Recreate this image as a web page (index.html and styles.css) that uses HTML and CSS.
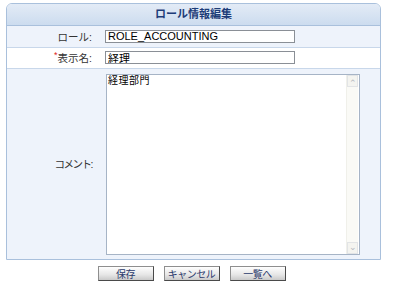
FILE: index.html
```html
<!DOCTYPE html>
<html lang="ja">
<head>
    <meta charset="UTF-8">
    <meta name="viewport" content="width=device-width, initial-scale=1.0">
    <title>ロール情報編集</title>
    <link rel="stylesheet" href="styles.css">
</head>
<body>
    <div class="panel">
        <div class="panel-title">ロール情報編集</div>
        <table class="form">
            <tr class="row odd">
                <th class="label">ロール:</th>
                <td class="value"><input type="text" class="field" value="ROLE_ACCOUNTING"></td>
            </tr>
            <tr class="row even">
                <th class="label"><span class="req">*</span>表示名:</th>
                <td class="value"><input type="text" class="field" value="経理"></td>
            </tr>
            <tr class="row odd comment-row">
                <th class="label narrow">コメント:</th>
                <td class="value">
                    <div class="memo">
                        <textarea class="memo-text">経理部門</textarea>
                        <!-- old style scrollbar -->
                        <div class="memo-bar">
                            <span class="bar-btn">&#8963;</span>
                            <span class="bar-btn down">&#8964;</span>
                        </div>
                    </div>
                </td>
            </tr>
        </table>
    </div>
    <div class="actions">
        <button class="btn">保存</button>
        <button class="btn">キャンセル</button>
        <button class="btn">一覧へ</button>
    </div>
</body>
</html>
```

FILE: styles.css
```css
* {
    box-sizing: border-box;
}
body {
    margin: 0;
    background: #fff;
    color: #333;
    font-family: "Liberation Sans", "Noto Sans CJK JP", sans-serif;
    font-size: 11px;
}
.panel {
    margin: 3px 0 0 6px;
    width: 375px;
    border: 1px solid #a9c0dc;
    border-radius: 6px 6px 0 0;
    overflow: hidden;
}
.panel-title {
    height: 22px;
    line-height: 21px;
    text-align: center;
    font-weight: bold;
    color: #1d3c78;
    background: linear-gradient(#e3ebf6, #ccdcef);
    border-bottom: 1px solid #a9c0dc;
}
.form {
    width: 100%;
    border-collapse: collapse;
    table-layout: fixed;
}
.row {
    height: 21px;
    border-bottom: 1px solid #c8d7ea;
}
.row.odd {
    background: #eef3fb;
}
.row.even {
    background: #fff;
}
.comment-row {
    height: 190px;
    border-bottom: none;
}
.label {
    width: 94px;
    padding: 0 9px 0 0;
    text-align: right;
    font-weight: normal;
    font-size: 10.5px;
    color: #333;
    vertical-align: middle;
}
.label.narrow {
    letter-spacing: -1.5px;
}
.req {
    color: #d22;
    font-size: 9px;
    vertical-align: top;
}
.value {
    padding: 0 0 0 4px;
    vertical-align: middle;
}
.field {
    display: block;
    width: 190px;
    height: 13px;
    margin: 0;
    padding: 0 2px;
    border: 1px solid #8a8f96;
    font-family: "Liberation Sans", "Noto Sans CJK JP", sans-serif;
    font-size: 11px;
    line-height: 11px;
    color: #000;
    background: #fff;
}
.comment-row .value {
    padding: 5px 0 4px 5px;
    vertical-align: top;
}
.memo {
    display: flex;
    width: 254px;
    height: 181px;
    border: 1px solid #a6b4c6;
    background: #fff;
}
.memo-text {
    flex: 1;
    border: none;
    resize: none;
    overflow: hidden;
    padding: 0 1px;
    font-family: "DejaVu Sans Mono", "Noto Sans CJK JP", monospace;
    font-size: 10px;
    line-height: 12px;
    letter-spacing: 0.5px;
    color: #000;
}
.memo-bar {
    width: 12px;
    margin-right: 1px;
    display: flex;
    flex-direction: column;
    justify-content: space-between;
    background: #fafaf6;
    border-left: 1px solid #f0f0ea;
}
.bar-btn {
    height: 12px;
    line-height: 14px;
    text-align: center;
    font-size: 9px;
    color: #b5b9bf;
    background: #f4f4f0;
    border: 1px solid #e2e4e6;
}
.bar-btn.down {
    line-height: 8px;
}
.actions {
    width: 375px;
    margin: 6px 0 0 6px;
    padding-right: 4px;
    display: flex;
    justify-content: center;
    gap: 10px;
}
.btn {
    width: 56px;
    height: 15px;
    padding: 0;
    border: 1px solid;
    border-color: #8e8e8e #4a4a4a #4a4a4a #8e8e8e;
    background: linear-gradient(#fefefe, #e6e6e6 60%, #c9c9c9);
    color: #2b3a6c;
    font-family: "Noto Sans CJK JP", sans-serif;
    font-size: 10px;
    line-height: 13px;
    letter-spacing: -0.5px;
    white-space: nowrap;
}
```
